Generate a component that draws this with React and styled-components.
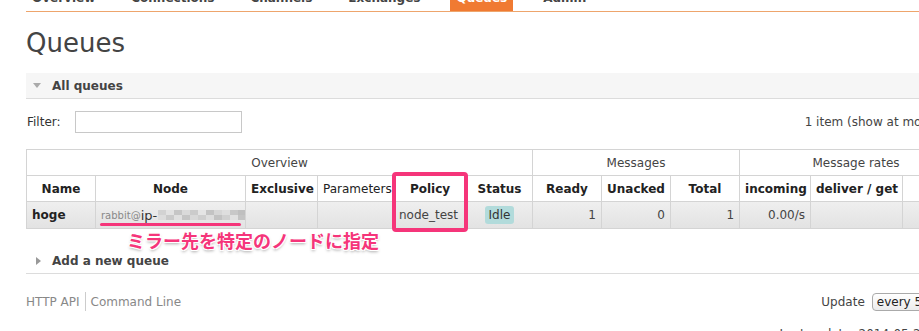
import React from "react";
import styled, { createGlobalStyle } from "styled-components";

const GlobalStyle = createGlobalStyle`
  html, body {
    margin: 0;
    padding: 0;
    overflow: hidden;
    background: #fff;
  }
  body {
    font-family: "DejaVu Sans", Verdana, sans-serif;
    font-size: 12px;
    color: #484848;
  }
`;

const navItems = ["Overview", "Connections", "Channels", "Exchanges", "Queues", "Admin"];

const columns = [
  { key: "name", label: "Name", width: 69 },
  { key: "node", label: "Node", width: 150 },
  { key: "exclusive", label: "Exclusive", width: 72 },
  { key: "params", label: "Parameters", width: 76, light: true },
  { key: "policy", label: "Policy", width: 73 },
  { key: "status", label: "Status", width: 66 },
  { key: "ready", label: "Ready", width: 69 },
  { key: "unacked", label: "Unacked", width: 69 },
  { key: "total", label: "Total", width: 69 },
  { key: "incoming", label: "incoming", width: 71 },
  { key: "deliver", label: "deliver / get", width: 92 },
  { key: "ack", label: "ack", width: 70 },
  { key: "more", label: "", width: 40 },
];

const mosaic = [
  "#d2d2d2", "#e2e2e2", "#c6c6c6", "#dadada", "#cbcbcb", "#e4e4e4", "#c3c3c3", "#d6d6d6", "#dedede", "#c8c8c8", "#bfbfbf",
  "#dcdcdc", "#cacaca", "#e0e0e0", "#c5c5c5", "#d8d8d8", "#cecece", "#dddddd", "#c2c2c2", "#d0d0d0", "#e1e1e1", "#c4c4c4",
];

export default function App() {
  return (
    <>
      <GlobalStyle />
      <Page>
        <Nav>
          {navItems.map((item) => (
            <NavItem key={item} $active={item === "Queues"}>{item}</NavItem>
          ))}
        </Nav>

        <Title>Queues</Title>

        <SectionHeader>
          <TriangleDown />
          <span>All queues</span>
        </SectionHeader>

        <FilterRow>
          <FilterLabel>Filter:</FilterLabel>
          <FilterInput />
          <ItemCount>1 item (show at most 100 items)</ItemCount>
        </FilterRow>

        <TableWrap>
          <List>
            <colgroup>
              {columns.map((c) => (
                <col key={c.key} style={{ width: c.width }} />
              ))}
            </colgroup>
            <thead>
              <GroupRow>
                <GroupTh colSpan={6}>Overview</GroupTh>
                <GroupTh colSpan={3}>Messages</GroupTh>
                <GroupTh colSpan={3}>Message rates</GroupTh>
                <GroupTh />
              </GroupRow>
              <HeadRow>
                {columns.map((c) => (
                  <Th key={c.key} $light={c.light}>{c.label}</Th>
                ))}
              </HeadRow>
            </thead>
            <tbody>
              <DataRow>
                <Td><b>hoge</b></Td>
                <Td>
                  <NodeName>
                    <small>rabbit@</small>ip-
                    <Mosaic>
                      {mosaic.map((c, i) => (
                        <span key={i} style={{ background: c }} />
                      ))}
                    </Mosaic>
                  </NodeName>
                </Td>
                <Td />
                <Td />
                <Td>node_test</Td>
                <Td $center><Badge>Idle</Badge></Td>
                <Td $right>1</Td>
                <Td $right>0</Td>
                <Td $right>1</Td>
                <Td $right>0.00/s</Td>
                <Td />
                <Td />
                <Td />
              </DataRow>
            </tbody>
          </List>

          <PolicyHighlight />
          <NodeUnderline />
          <Callout>ミラー先を特定のノードに指定</Callout>
        </TableWrap>

        <CollapsedSection>
          <TriangleRight />
          <span>Add a new queue</span>
        </CollapsedSection>

        <Footer>
          <FooterLinks>
            <FooterLink>HTTP API</FooterLink>
            <FooterLink $divider>Command Line</FooterLink>
          </FooterLinks>
          <UpdateBox>
            Update
            <SelectButton>every 5 seconds</SelectButton>
          </UpdateBox>
        </Footer>
        <LastUpdate>Last update: 2014-05-21 12:00:00</LastUpdate>
      </Page>
    </>
  );
}

const Page = styled.div`
  width: 1000px;
  padding-left: 26px;
`;

const Nav = styled.div`
  display: flex;
  margin-top: -12px;
  height: 23px;
  border-bottom: 1px solid #eea56c;
`;

const NavItem = styled.div`
  height: 23px;
  line-height: 20px;
  padding: 0 6px;
  margin-right: 24px;
  font-weight: bold;
  color: ${(p) => (p.$active ? "#fff" : "#444")};
  background: ${(p) => (p.$active ? "#f07a32" : "transparent")};
`;

const Title = styled.h1`
  margin: 16px 0 0;
  font-size: 26px;
  line-height: 30px;
  font-weight: normal;
  color: #444;
`;

const SectionHeader = styled.div`
  display: flex;
  align-items: center;
  gap: 11px;
  height: 25px;
  margin-top: 15px;
  padding-left: 7px;
  background: #f6f6f6;
  border-bottom: 1px solid #dcdcdc;
  font-weight: bold;
  color: #444;
`;

const TriangleDown = styled.span`
  width: 0;
  height: 0;
  border-left: 4px solid transparent;
  border-right: 4px solid transparent;
  border-top: 5px solid #aaa;
`;

const TriangleRight = styled.span`
  width: 0;
  height: 0;
  border-top: 4px solid transparent;
  border-bottom: 4px solid transparent;
  border-left: 5px solid #999;
`;

const FilterRow = styled.div`
  display: flex;
  align-items: center;
  padding: 12px 0 16px 1px;
`;

const FilterLabel = styled.span`
  color: #333;
`;

const FilterInput = styled.input`
  box-sizing: border-box;
  width: 167px;
  height: 22px;
  margin-left: 14px;
  border: 1px solid #c8c8c8;
  outline: none;
`;

const ItemCount = styled.span`
  margin-left: auto;
  margin-right: 25px;
  color: #444;
`;

const TableWrap = styled.div`
  position: relative;
`;

const List = styled.table`
  table-layout: fixed;
  width: 986px;
  border-collapse: collapse;
  font-size: 12px;

  th, td {
    border: 1px solid #d4d4d4;
    padding: 0 5px;
    white-space: nowrap;
    overflow: hidden;
  }
`;

const GroupRow = styled.tr`
  height: 26px;
`;

const GroupTh = styled.th`
  font-weight: normal;
  color: #444;
  text-align: center;
`;

const HeadRow = styled.tr`
  height: 26px;
`;

const Th = styled.th`
  font-weight: ${(p) => (p.$light ? "normal" : "bold")};
  color: #222;
  text-align: center;
`;

const DataRow = styled.tr`
  height: 27px;
  background: linear-gradient(#efefef, #e2e2e2);
`;

const Td = styled.td`
  color: #444;
  text-align: ${(p) => (p.$right ? "right" : p.$center ? "center" : "left")};
  b {
    color: #222;
  }
`;

const NodeName = styled.span`
  display: inline-flex;
  align-items: center;
  font-size: 13px;
  color: #333;
  small {
    font-size: 10px;
    color: #888;
  }
`;

const Mosaic = styled.span`
  display: inline-grid;
  grid-template-columns: repeat(11, 8px);
  grid-auto-rows: 5px;
  margin-left: 1px;
`;

const Badge = styled.span`
  display: inline-block;
  padding: 1px 4px;
  line-height: 16px;
  border-radius: 3px;
  background: #b2dbdb;
  color: #333;
`;

const PolicyHighlight = styled.div`
  position: absolute;
  left: 366px;
  top: 23px;
  width: 68px;
  height: 52px;
  border: 4px solid #f5357a;
  border-radius: 4px;
`;

const NodeUnderline = styled.div`
  position: absolute;
  left: 74px;
  top: 74px;
  width: 141px;
  height: 3px;
  border-radius: 2px;
  background: #f5357a;
`;

const Callout = styled.div`
  position: absolute;
  left: 101px;
  top: 82px;
  font-family: "Noto Sans CJK JP", sans-serif;
  font-size: 18px;
  line-height: 18px;
  font-weight: bold;
  color: #f5357a;
  white-space: nowrap;
  text-shadow:
    -1px -1px 0 #fff, 1px -1px 0 #fff, -1px 1px 0 #fff, 1px 1px 0 #fff,
    0 2px 3px rgba(0, 0, 0, 0.35);
`;

const CollapsedSection = styled.div`
  display: flex;
  align-items: center;
  gap: 11px;
  height: 24px;
  margin-top: 20px;
  padding-left: 10px;
  border-bottom: 1px solid #dcdcdc;
  font-weight: bold;
  color: #444;
`;

const Footer = styled.div`
  display: flex;
  align-items: center;
  justify-content: space-between;
  margin-top: 18px;
  height: 19px;
`;

const FooterLinks = styled.div`
  display: flex;
  align-items: stretch;
  height: 19px;
`;

const FooterLink = styled.span`
  display: flex;
  align-items: center;
  color: #888;
  padding: ${(p) => (p.$divider ? "0 0 0 5px" : "0 5px 0 0")};
  border-left: ${(p) => (p.$divider ? "1px solid #ccc" : "none")};
`;

const UpdateBox = styled.div`
  display: flex;
  align-items: center;
  gap: 7px;
  color: #444;
  margin-right: 30px;
`;

const SelectButton = styled.span`
  display: inline-block;
  height: 16px;
  line-height: 16px;
  padding: 0 20px 0 4px;
  border: 1px solid #aaa;
  border-radius: 4px;
  background: linear-gradient(#fff, #ececec);
  color: #222;
  font-size: 12px;
`;

const LastUpdate = styled.div`
  margin-top: 16px;
  text-align: right;
  padding-right: 40px;
  color: #444;
`;
